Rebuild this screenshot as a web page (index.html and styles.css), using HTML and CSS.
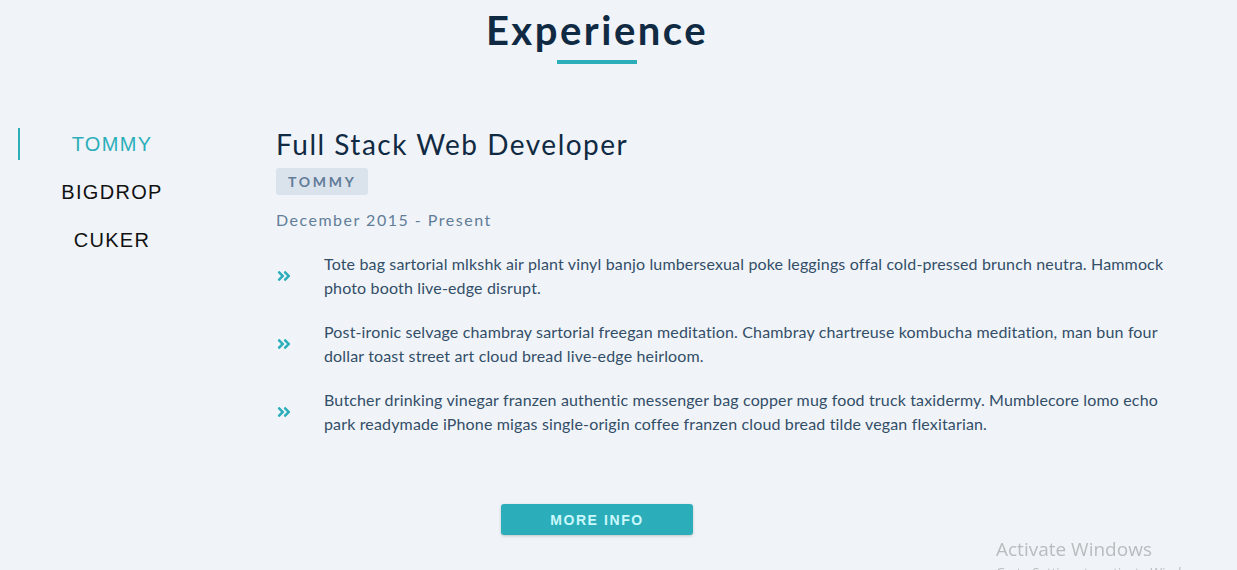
FILE: index.html
```html
<!DOCTYPE html>
<html lang="en">
<head>
<meta charset="utf-8">
<title>Experience</title>
<link rel="stylesheet" href="styles.css">
</head>
<body>
<section class="section">
  <div class="title">
    <h2>Experience</h2>
    <div class="underline"></div>
  </div>
  <div class="jobs-center">
    <div class="btn-container">
      <button class="job-btn active-btn">TOMMY</button>
      <button class="job-btn">BIGDROP</button>
      <button class="job-btn">CUKER</button>
    </div>
    <article class="job-info">
      <h3>Full Stack Web Developer</h3>
      <h4>TOMMY</h4>
      <p class="job-date">December 2015 - Present</p>
      <div class="job-desc">
        <svg class="job-icon" viewBox="0 0 448 512"><path d="M224.3 273l-136 136c-9.4 9.4-24.6 9.4-33.9 0l-22.6-22.6c-9.4-9.4-9.4-24.6 0-33.9l96.4-96.4-96.4-96.4c-9.4-9.4-9.4-24.6 0-33.9L54.3 103c9.4-9.4 24.6-9.4 33.9 0l136 136c9.5 9.4 9.5 24.6.1 34zm192-34l-136-136c-9.4-9.4-24.6-9.4-33.9 0l-22.6 22.6c-9.4 9.4-9.4 24.6 0 33.9l96.4 96.4-96.4 96.4c-9.4 9.4-9.4 24.6 0 33.9l22.6 22.6c9.4 9.4 24.6 9.4 33.9 0l136-136c9.4-9.2 9.4-24.4 0-33.8z"/></svg>
        <p>Tote bag sartorial mlkshk air plant vinyl banjo lumbersexual poke leggings offal cold-pressed brunch neutra. Hammock photo booth live-edge disrupt.</p>
      </div>
      <div class="job-desc">
        <svg class="job-icon" viewBox="0 0 448 512"><path d="M224.3 273l-136 136c-9.4 9.4-24.6 9.4-33.9 0l-22.6-22.6c-9.4-9.4-9.4-24.6 0-33.9l96.4-96.4-96.4-96.4c-9.4-9.4-9.4-24.6 0-33.9L54.3 103c9.4-9.4 24.6-9.4 33.9 0l136 136c9.5 9.4 9.5 24.6.1 34zm192-34l-136-136c-9.4-9.4-24.6-9.4-33.9 0l-22.6 22.6c-9.4 9.4-9.4 24.6 0 33.9l96.4 96.4-96.4 96.4c-9.4 9.4-9.4 24.6 0 33.9l22.6 22.6c9.4 9.4 24.6 9.4 33.9 0l136-136c9.4-9.2 9.4-24.4 0-33.8z"/></svg>
        <p>Post-ironic selvage chambray sartorial freegan meditation. Chambray chartreuse kombucha meditation, man bun four dollar toast street art cloud bread live-edge heirloom.</p>
      </div>
      <div class="job-desc">
        <svg class="job-icon" viewBox="0 0 448 512"><path d="M224.3 273l-136 136c-9.4 9.4-24.6 9.4-33.9 0l-22.6-22.6c-9.4-9.4-9.4-24.6 0-33.9l96.4-96.4-96.4-96.4c-9.4-9.4-9.4-24.6 0-33.9L54.3 103c9.4-9.4 24.6-9.4 33.9 0l136 136c9.5 9.4 9.5 24.6.1 34zm192-34l-136-136c-9.4-9.4-24.6-9.4-33.9 0l-22.6 22.6c-9.4 9.4-9.4 24.6 0 33.9l96.4 96.4-96.4 96.4c-9.4 9.4-9.4 24.6 0 33.9l22.6 22.6c9.4 9.4 24.6 9.4 33.9 0l136-136c9.4-9.2 9.4-24.4 0-33.8z"/></svg>
        <p>Butcher drinking vinegar franzen authentic messenger bag copper mug food truck taxidermy. Mumblecore lomo echo park readymade iPhone migas single-origin coffee franzen cloud bread tilde vegan flexitarian.</p>
      </div>
    </article>
  </div>
  <div class="more">
    <button class="btn">MORE INFO</button>
  </div>
</section>
<div class="watermark">
  <div class="wm-title">Activate Windows</div>
  <div class="wm-sub">Go to Settings to activate Windows.</div>
</div>
</body>
</html>
```
FILE: styles.css
```css
* {
  box-sizing: border-box;
}

body {
  margin: 0;
  background: #f0f4f8;
  font-family: "Lato", "Open Sans", sans-serif;
  color: #334e68;
  overflow: hidden;
  height: 570px;
}

.section {
  padding: 6px 0 0 18px;
  width: 1194px;
}

.title {
  display: flex;
  flex-direction: column;
  align-items: center;
  margin-left: -18px;
}

.title h2 {
  margin: 0;
  font-size: 40px;
  line-height: 48px;
  font-weight: 700;
  letter-spacing: 2.5px;
  color: #102a43;
}

.underline {
  width: 80px;
  height: 4px;
  margin-top: 6px;
  background: #2caeba;
}

.jobs-center {
  display: grid;
  grid-template-columns: 186px 1fr;
  column-gap: 72px;
  margin-top: 64px;
}

.btn-container {
  display: flex;
  flex-direction: column;
  gap: 16px;
}

.job-btn {
  background: transparent;
  border: none;
  border-left: 2px solid transparent;
  height: 32px;
  padding: 0;
  font-family: "Liberation Sans", Arial, sans-serif;
  font-size: 20px;
  letter-spacing: 1.3px;
  color: #111;
  cursor: pointer;
}

.job-btn.active-btn {
  color: #2caeba;
  border-left-color: #2caeba;
}

.job-info {
  width: 910px;
}

.job-info h3 {
  margin: 0;
  font-size: 28px;
  font-weight: 400;
  line-height: 32px;
  letter-spacing: 1.5px;
  color: #102a43;
}

.job-info h4 {
  display: inline-block;
  margin: 8px 0 0;
  padding: 0 12px;
  height: 27px;
  line-height: 27px;
  font-size: 14px;
  font-weight: 700;
  letter-spacing: 2.7px;
  color: #617d98;
  background: #dae2ec;
  border-radius: 3px;
}

.job-date {
  margin: 15px 0 0;
  font-size: 16px;
  line-height: 20px;
  letter-spacing: 1.5px;
  color: #617d98;
}

.job-desc {
  display: flex;
  align-items: center;
  margin-top: 20px;
}

.job-date + .job-desc {
  margin-top: 22px;
}

.job-icon {
  flex: none;
  width: 14px;
  height: 16px;
  margin-left: 1px;
  margin-right: 33px;
  fill: #2caeba;
}

.job-desc p {
  margin: 0;
  width: 860px;
  font-size: 16px;
  line-height: 24px;
  letter-spacing: 0.15px;
}

.more {
  display: flex;
  justify-content: center;
  margin-top: 68px;
  margin-left: -18px;
}

.btn {
  width: 192px;
  height: 31px;
  border: none;
  border-radius: 3px;
  background: #2caeba;
  color: #cbf8fc;
  font-family: "Liberation Sans", Arial, sans-serif;
  font-size: 14px;
  font-weight: 700;
  letter-spacing: 1.6px;
  box-shadow: 0 1px 3px rgba(0, 0, 0, 0.2);
  cursor: pointer;
}

.watermark {
  position: fixed;
  left: 996px;
  top: 537px;
  color: #b9bcbf;
  font-family: "Open Sans", sans-serif;
  pointer-events: none;
}

.wm-title {
  font-size: 19px;
  line-height: 25px;
}

.wm-sub {
  font-size: 13px;
  line-height: 20px;
}
```
